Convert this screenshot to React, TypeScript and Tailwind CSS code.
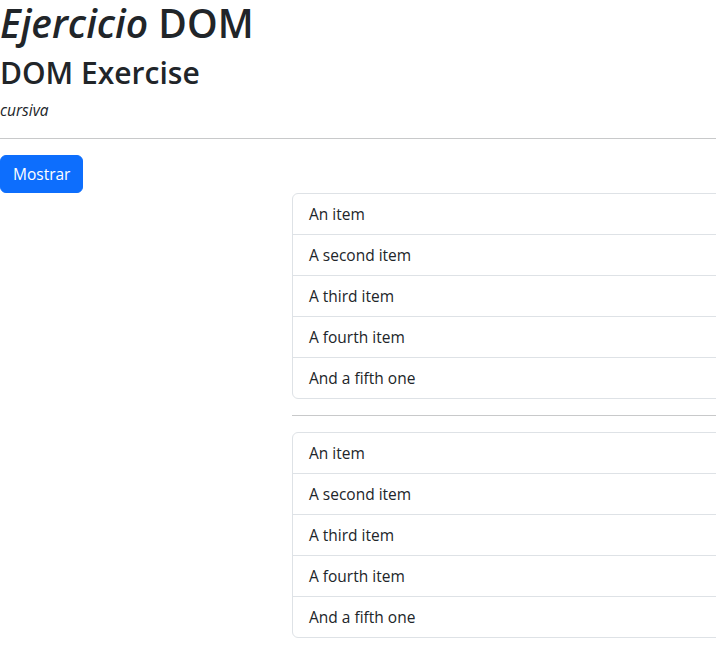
const items = ["An item", "A second item", "A third item", "A fourth item", "And a fifth one"];

function ListGroup() {
  return (
    <ul className="flex w-[460px] flex-col rounded-[6px] border border-[#dee2e6] bg-white">
      {items.map((item, i) => (
        <li
          key={item}
          className={`px-4 py-2 text-[15.5px] leading-6 ${i > 0 ? "border-t border-[#dee2e6]" : ""}`}
        >
          {item}
        </li>
      ))}
    </ul>
  );
}

export default function App() {
  return (
    <div className="h-[668px] w-[716px] overflow-hidden bg-white font-['Segoe_UI','Open_Sans',sans-serif] text-base text-[#212529]">
      <h1 className="mb-2 text-[39px] leading-[46px] font-semibold">
        <em>Ejercicio</em> DOM
      </h1>
      <h2 className="mb-1.5 text-[30px] leading-[38px] font-semibold">DOM Exercise</h2>
      <p className="text-[15.5px] leading-6">
        <em>cursiva</em>
      </p>
      <hr className="mt-4 mb-4 border-t border-[#c8c9ca]" />
      <button className="rounded-[6px] border border-[#0d6efd] bg-[#0d6efd] px-3 py-1.5 text-[15.5px] leading-6 text-white">
        Mostrar
      </button>
      <div className="pl-[292px]">
        <ListGroup />
        <hr className="my-4 w-[460px] border-t border-[#c8c9ca]" />
        <ListGroup />
      </div>
    </div>
  );
}
